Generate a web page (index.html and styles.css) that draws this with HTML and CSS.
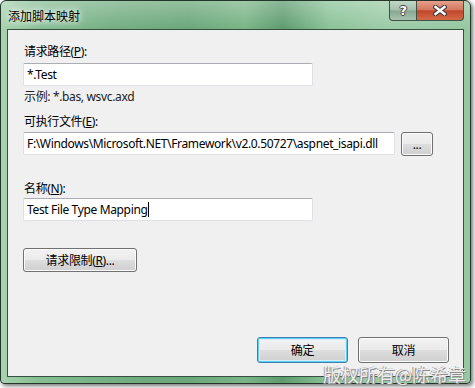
FILE: index.html
```html
<!DOCTYPE html>
<html lang="zh-CN">
<head>
  <meta charset="UTF-8" />
  <title>添加脚本映射</title>
  <link rel="stylesheet" href="styles.css">
</head>
<body>
  <div class="window">
    <div class="titlebar">
      <span class="title">添加脚本映射</span>
      <div class="cap-btns">
        <span class="cap-btn help">?</span>
        <span class="cap-btn close">
          <svg width="14" height="11" viewBox="0 0 14 11">
            <path d="M2.5 2 L11.5 9 M11.5 2 L2.5 9" stroke="#3b3b3b" stroke-width="4.6" stroke-linecap="square" fill="none"/>
            <path d="M2.5 2 L11.5 9 M11.5 2 L2.5 9" stroke="#fff" stroke-width="2.4" stroke-linecap="square" fill="none"/>
          </svg>
        </span>
      </div>
    </div>
    <div class="client">
      <label class="lbl first">请求路径(<u>P</u>):</label>
      <div class="textbox short">*.Test</div>
      <div class="hint">示例: *.bas, wsvc.axd</div>
      <label class="lbl second">可执行文件(<u>E</u>):</label>
      <div class="row">
        <div class="textbox long">F:\Windows\Microsoft.NET\Framework\v2.0.50727\aspnet_isapi.dll</div>
        <button class="btn browse">...</button>
      </div>
      <label class="lbl third">名称(<u>N</u>):</label>
      <div class="textbox short">Test File Type Mapping<span class="caret"></span></div>
      <button class="btn limits">请求限制(<u>R</u>)...</button>
      <div class="footer">
        <button class="btn ok">确定</button>
        <button class="btn cancel">取消</button>
      </div>
    </div>
    <div class="watermark">版权所有@陈希章</div>
  </div>
</body>
</html>
```

FILE: styles.css
```css
* {
  margin: 0;
  padding: 0;
  box-sizing: border-box;
}
body {
  background: #fff;
  width: 475px;
  height: 388px;
  overflow: hidden;
  font-family: 'Noto Sans', 'Noto Sans CJK SC', sans-serif;
  font-size: 12px;
  letter-spacing: -0.35px;
  color: #000;
}
.window {
  position: relative;
  width: 471px;
  height: 384px;
  display: flex;
  flex-direction: column;
  padding: 0 6px 6px;
  border: 1px solid #24352a;
  border-radius: 6px 6px 4px 4px;
  background:
    linear-gradient(to bottom, rgba(255,255,255,0.28), rgba(255,255,255,0) 28px),
    linear-gradient(to right, #a8d2b0 0%, #86bd93 8%, #74ae82 25%, #6aa77a 40%, #7ab587 52%, #5e9c6f 60%, #8ac398 70%, #9ccba7 82%, #95c7a0 100%);
  box-shadow: 2px 2px 4px rgba(0,0,0,0.55);
}
.titlebar {
  height: 28px;
  display: flex;
  align-items: flex-start;
}
.title {
  padding: 8px 0 0 1px;
  line-height: 15px;
  letter-spacing: 0;
  text-shadow: 0 0 6px #fff, 0 0 10px #fff;
}
.cap-btns {
  display: flex;
  margin-left: auto;
}
.cap-btn {
  height: 20px;
  display: flex;
  justify-content: center;
  align-items: center;
  border: 1px solid #3f5246;
  border-top: none;
}
.help {
  width: 28px;
  border-radius: 0 0 0 4px;
  background: linear-gradient(#c3d8c7, #a4bfaa 48%, #88a792 52%, #a6c3ae);
  color: #fff;
  font-family: 'DejaVu Sans', sans-serif;
  font-weight: bold;
  font-size: 13px;
  text-shadow: 1px 0 0 #444, -1px 0 0 #444, 0 1px 0 #444, 0 -1px 0 #444;
}
.close {
  width: 47px;
  border-left: none;
  border-radius: 0 0 4px 0;
  background: linear-gradient(#e6a08c, #d5785f 45%, #c2462b 52%, #d46a48);
}
.client {
  flex: 1;
  display: flex;
  flex-direction: column;
  align-items: flex-start;
  padding: 14px 14px 13px 15px;
  background: #f0f0f0;
  border: 1px solid #35503e;
}
.lbl, .hint {
  display: block;
  line-height: 15px;
  margin-left: 1px;
}
.first {
  margin-bottom: 4px;
}
.hint {
  margin-top: 3px;
  color: #222;
}
.second {
  margin: 10px 0 3px 1px;
}
.third {
  margin: 25px 0 2px 1px;
}
.textbox {
  height: 23px;
  padding: 0 3px;
  display: flex;
  align-items: center;
  background: #fff;
  border: 1px solid #dde1e7;
  border-top-color: #abadb3;
  border-radius: 2px;
  white-space: nowrap;
  overflow: hidden;
}
.short {
  width: 290px;
}
.long {
  width: 372px;
}
.caret {
  width: 1px;
  height: 15px;
  background: #000;
}
.row {
  display: flex;
  align-items: flex-start;
  gap: 6px;
}
.btn {
  height: 24px;
  font-family: 'Noto Sans', 'Noto Sans CJK SC', sans-serif;
  font-size: 12px;
  letter-spacing: -0.35px;
  color: #000;
  border: 1px solid #707070;
  border-radius: 3px;
  background: linear-gradient(#f2f2f2, #ebebeb 48%, #dddddd 52%, #cfcfcf);
  box-shadow: inset 0 0 0 1px #fbfbfb;
}
.browse {
  width: 32px;
}
.limits {
  width: 114px;
  margin-top: 27px;
}
.footer {
  margin-top: auto;
  align-self: flex-end;
  display: flex;
  gap: 10px;
}
.ok, .cancel {
  width: 91px;
  height: 26px;
}
.ok {
  border-color: #3c7fb1;
  box-shadow: inset 0 0 0 1px #5fd0f5, inset 0 0 0 2px #d5eef9;
}
.watermark {
  position: absolute;
  left: 322px;
  top: 363px;
  font-family: 'Noto Sans CJK SC', sans-serif;
  font-size: 18px;
  line-height: 20px;
  letter-spacing: 0;
  color: #ececec;
  text-shadow: 1px 1px 0 #8c8c8c, -1px 0 0 #a0a0a0;
}
```
